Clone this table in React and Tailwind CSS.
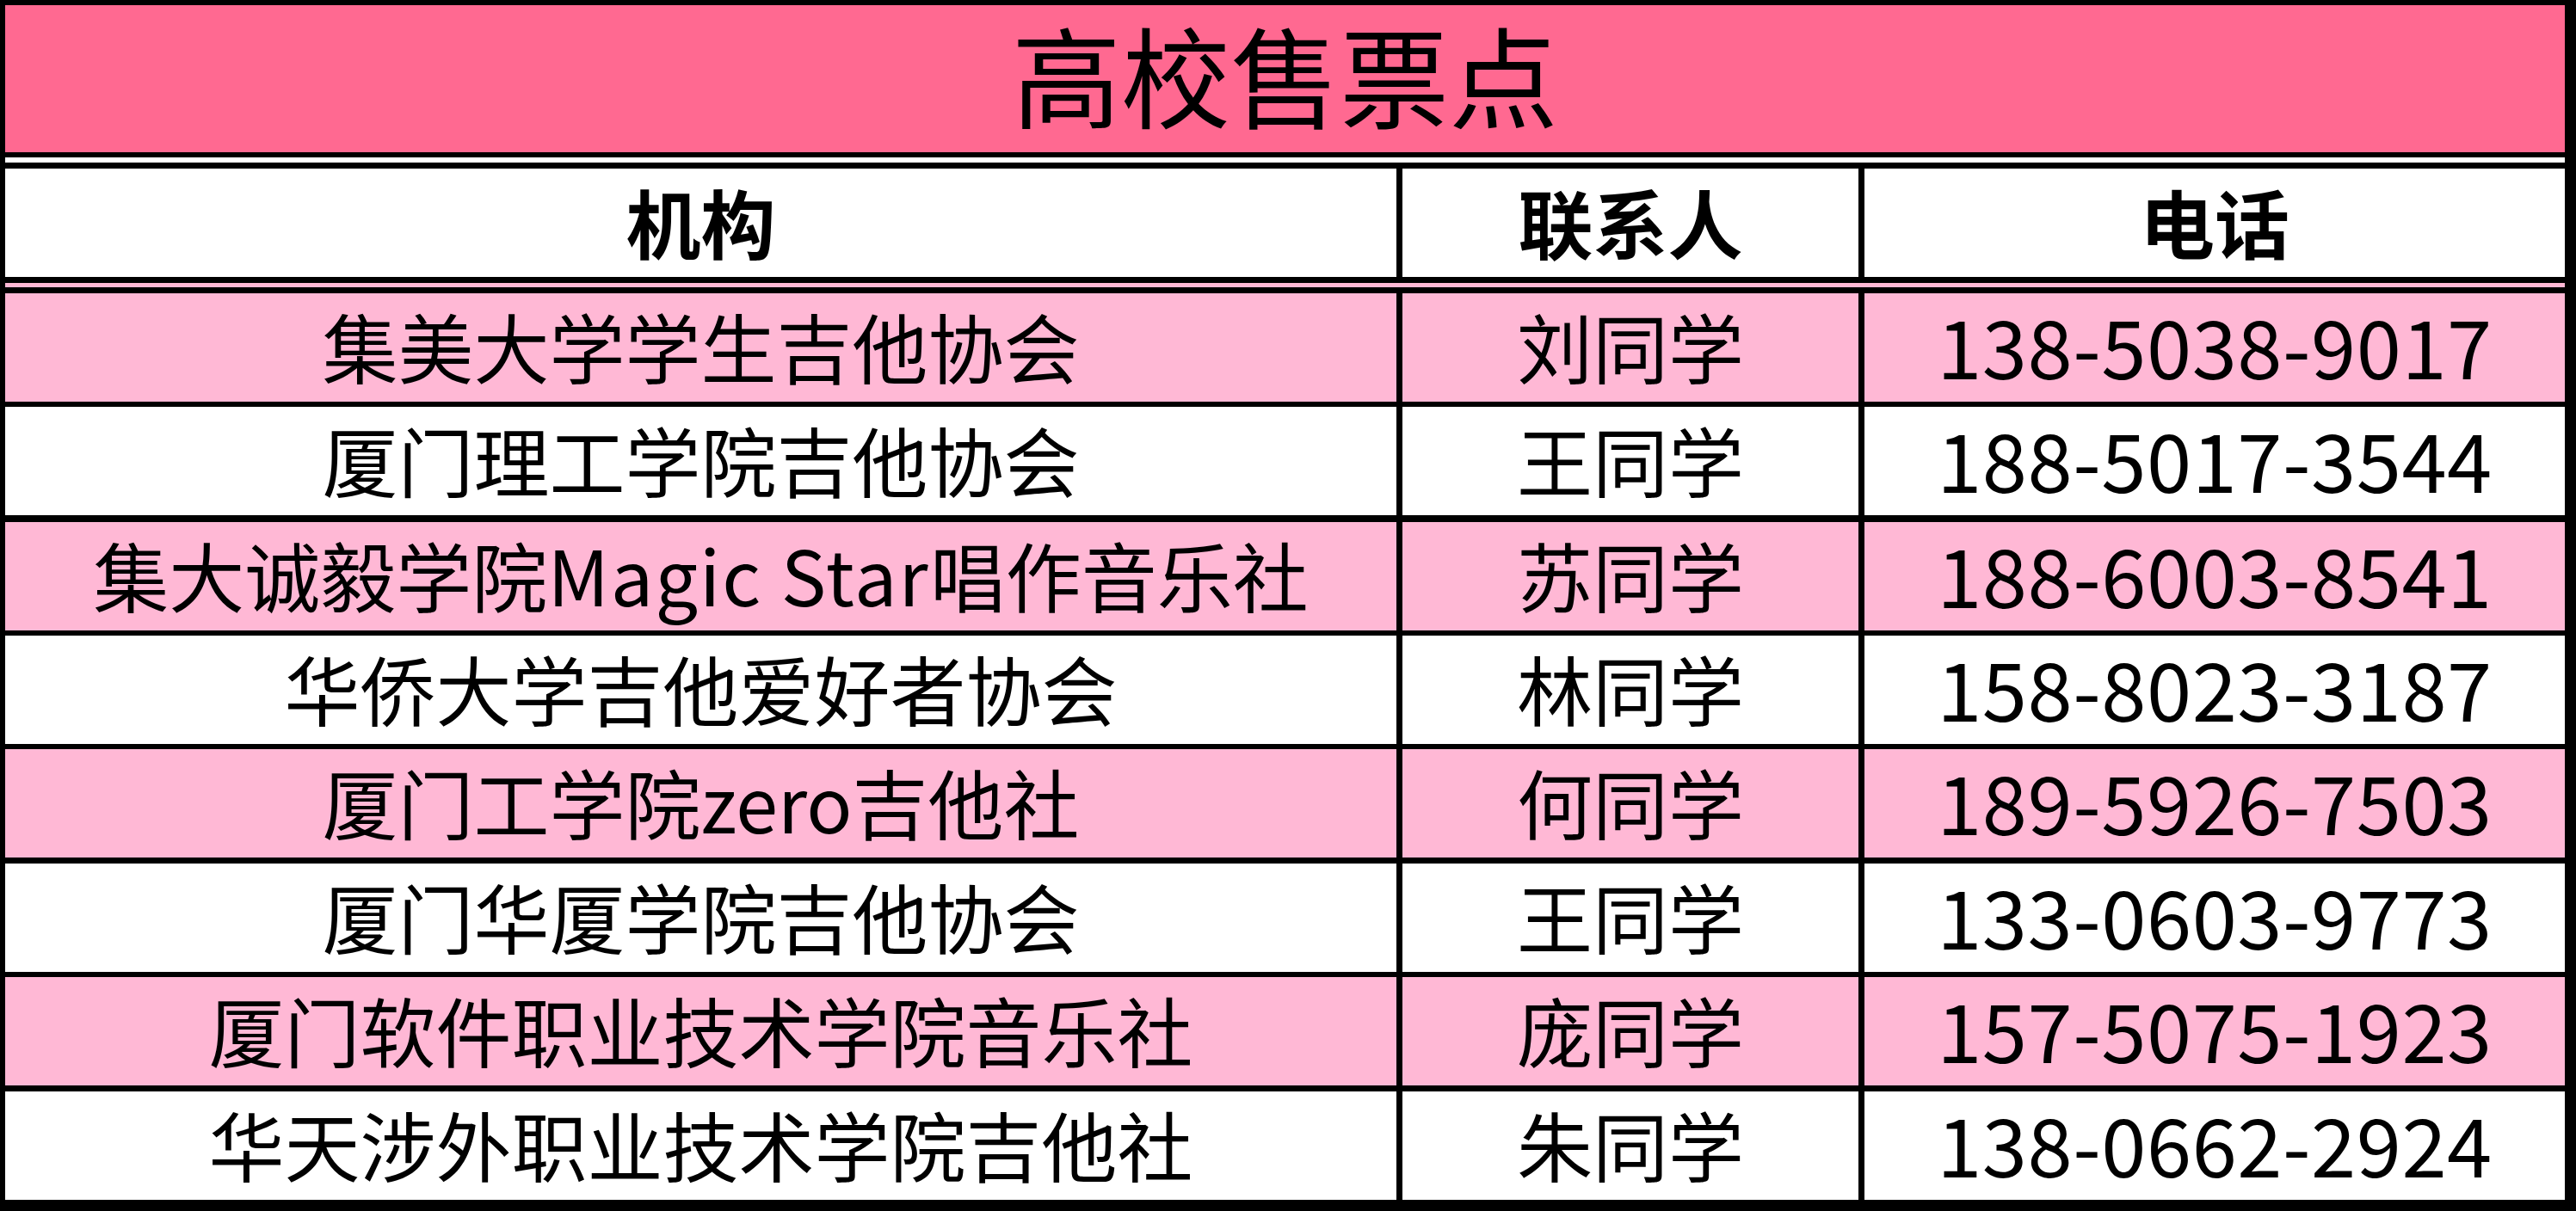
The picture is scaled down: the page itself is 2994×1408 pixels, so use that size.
import React from 'react'

const rows = [
  { org: '集美大学学生吉他协会', name: '刘同学', phone: '138-5038-9017', pink: true },
  { org: '厦门理工学院吉他协会', name: '王同学', phone: '188-5017-3544' },
  { org: <>集大诚毅学院<span className="tracking-[2px]">Magic Star</span>唱作音乐社</>, name: '苏同学', phone: '188-6003-8541', pink: true },
  { org: '华侨大学吉他爱好者协会', name: '林同学', phone: '158-8023-3187' },
  { org: '厦门工学院zero吉他社', name: '何同学', phone: '189-5926-7503', pink: true },
  { org: '厦门华厦学院吉他协会', name: '王同学', phone: '133-0603-9773' },
  { org: '厦门软件职业技术学院音乐社', name: '庞同学', phone: '157-5075-1923', pink: true },
  { org: '华天涉外职业技术学院吉他社', name: '朱同学', phone: '138-0662-2924' },
]

// black rules between the body rows
const seps = ['h-[6px]', 'h-[8px]', 'h-[6px]', 'h-[6px]', 'h-[7px]', 'h-[6px]', 'h-[7px]']

const Row = ({ cells, className, textClass }) => (
  <div className={`flex h-[126px] ${className}`}>
    <div className={`w-[1624px] border-r-[7px] border-black flex items-center justify-center ${textClass}`}>
      {cells[0]}
    </div>
    <div className={`w-[537px] border-r-[7px] border-black flex items-center justify-center ${textClass}`}>
      {cells[1]}
    </div>
    <div className="flex-1 flex items-center justify-center text-[94px] tracking-[0.5px] leading-[1.2] pb-[8px]">
      {cells[2]}
    </div>
  </div>
)

export default function App() {
  return (
    <div
      className="w-[2994px] h-[1408px] bg-black pl-[6px] pt-[6px] pr-[13px] pb-[13px] text-black"
      style={{ fontFamily: '"Noto Sans CJK SC", "Noto Sans", sans-serif' }}
    >
      <div className="flex flex-col h-full">
        <div className="h-[171px] bg-[#ff6991] flex items-center justify-center pb-[12px]">
          <span className="text-[127px] leading-[1.1]">高校售票点</span>
        </div>
        <div className="h-[6px] bg-black" />
        <div className="h-[6px] bg-white" />
        <div className="h-[7px] bg-black" />

        <div className="flex h-[126px] bg-white">
          <div className="w-[1624px] border-r-[7px] border-black flex items-center justify-center text-[87px] font-bold leading-[1.2] pb-[4px]">
            机构
          </div>
          <div className="w-[537px] border-r-[7px] border-black flex items-center justify-center text-[87px] font-bold leading-[1.2] pb-[4px]">
            联系人
          </div>
          <div className="flex-1 flex items-center justify-center text-[87px] font-bold leading-[1.2] pb-[4px]">
            电话
          </div>
        </div>

        <div className="h-[7px] bg-black" />
        <div className="h-[5px] bg-[#ffb8d5]" />
        <div className="h-[7px] bg-black" />

        {rows.map((r, i) => (
          <React.Fragment key={i}>
            <Row
              cells={[r.org, r.name, r.phone]}
              className={r.pink ? 'bg-[#ffb8d5]' : 'bg-white'}
              textClass="text-[88px] leading-[1.2] pb-[6px]"
            />
            {i < rows.length - 1 && <div className={`${seps[i]} bg-black`} />}
          </React.Fragment>
        ))}
      </div>
    </div>
  )
}
